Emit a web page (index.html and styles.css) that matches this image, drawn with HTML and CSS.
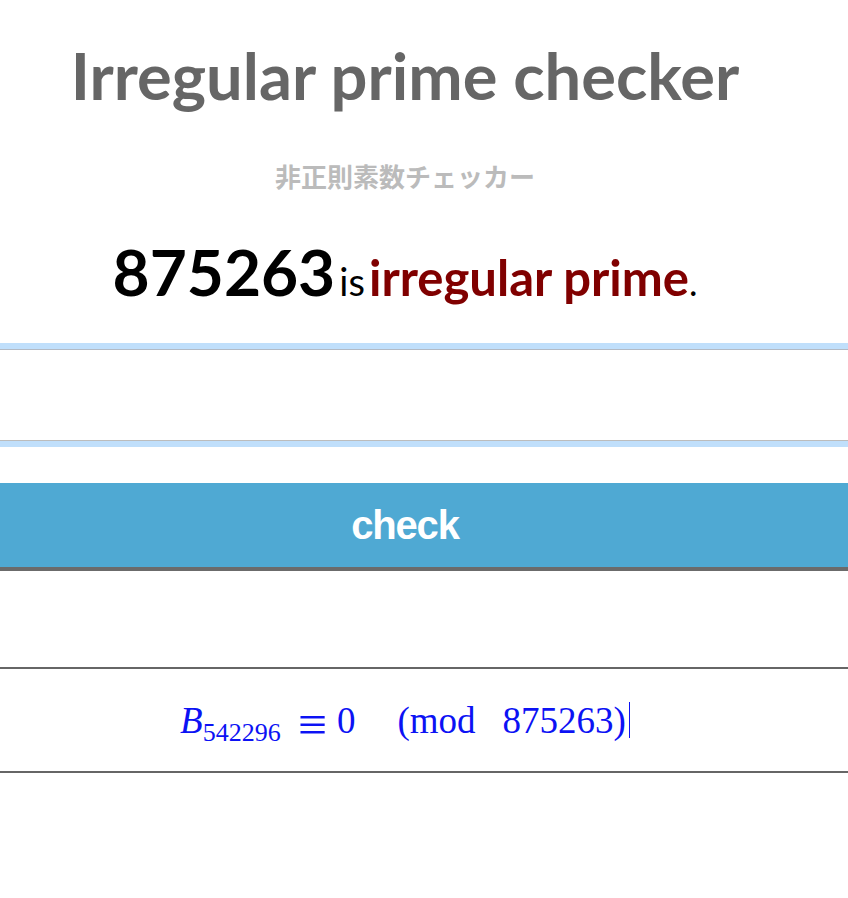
FILE: index.html
```html
<!DOCTYPE html>
<html lang="en">
<head>
<meta charset="utf-8">
<title>Irregular prime checker</title>
<link rel="stylesheet" href="styles.css">
</head>
<body>
<header class="head">
  <h1 class="title">Irregular prime checker</h1>
  <p class="subtitle">非正則素数チェッカー</p>
  <p class="result"><span class="num">875263</span> <span class="is">is</span> <span class="verdict">irregular prime</span><span class="dot">.</span></p>
</header>
<div class="field"></div>
<button class="check" type="button">check</button>
<div class="math-box">
  <div class="math"><span class="mi">B</span><span class="sub">542296</span><span class="op">≡</span><span class="zero">0</span><span class="paren">(mod</span><span class="modn">875263)</span><span class="caret"></span></div>
</div>
</body>
</html>
```

FILE: styles.css
```css
html, body {
  margin: 0;
  padding: 0;
  background: #fff;
}
body {
  font-family: Lato, "Noto Sans CJK JP", sans-serif;
}
.head {
  padding-right: 38px;
  text-align: center;
}
.title {
  margin: 0;
  padding-top: 35px;
  font-size: 65px;
  line-height: 80px;
  font-weight: 700;
  color: #666;
}
.subtitle {
  margin: 0;
  padding-top: 43px;
  font-family: "Noto Sans CJK JP", sans-serif;
  font-size: 26px;
  line-height: 36px;
  font-weight: 700;
  color: #bbb;
}
.result {
  margin: 0;
  padding-top: 42px;
  height: 72px;
  line-height: 72px;
  color: #000;
}
.num {
  font-size: 64px;
  font-weight: 700;
}
.is {
  font-size: 38px;
}
.verdict {
  font-size: 49px;
  font-weight: 700;
  color: #800000;
}
.dot {
  font-size: 36px;
}
.field {
  margin-top: 41px;
  height: 90px;
  border-top: 1px solid #b3bac4;
  border-bottom: 1px solid #bcbcbc;
  box-shadow: 0 0 0 6px #c0dffb;
}
.check {
  display: block;
  width: 100%;
  margin-top: 42px;
  height: 88px;
  border: 0;
  border-bottom: 4px solid #6b6b6b;
  background: #4fa9d3;
  color: #fff;
  font-family: "Liberation Sans", Arial, sans-serif;
  font-weight: 700;
  font-size: 40px;
  letter-spacing: -1.2px;
  padding: 0 38px 0 0;
}
.math-box {
  margin-top: 96px;
  border-top: 2px solid #666;
  border-bottom: 2px solid #666;
  height: 102px;
  display: flex;
  align-items: center;
  justify-content: center;
  padding-right: 38px;
}
.math {
  font-family: "Liberation Serif", "Times New Roman", serif;
  font-size: 37px;
  color: #0c12f4;
  display: flex;
  align-items: baseline;
  white-space: pre;
}
.mi {
  font-style: italic;
}
.sub {
  font-size: 26px;
  position: relative;
  top: 8px;
  margin-left: 0;
}
.op {
  margin-left: 17px;
  font-size: 52px;
  line-height: 20px;
  position: relative;
  top: 9px;
}
.zero {
  margin-left: 10px;
}
.paren {
  margin-left: 42px;
}
.modn {
  margin-left: 27px;
}
.caret {
  display: inline-block;
  width: 1px;
  height: 36px;
  background: #0c12f4;
  margin-left: 3px;
  align-self: center;
}
```
